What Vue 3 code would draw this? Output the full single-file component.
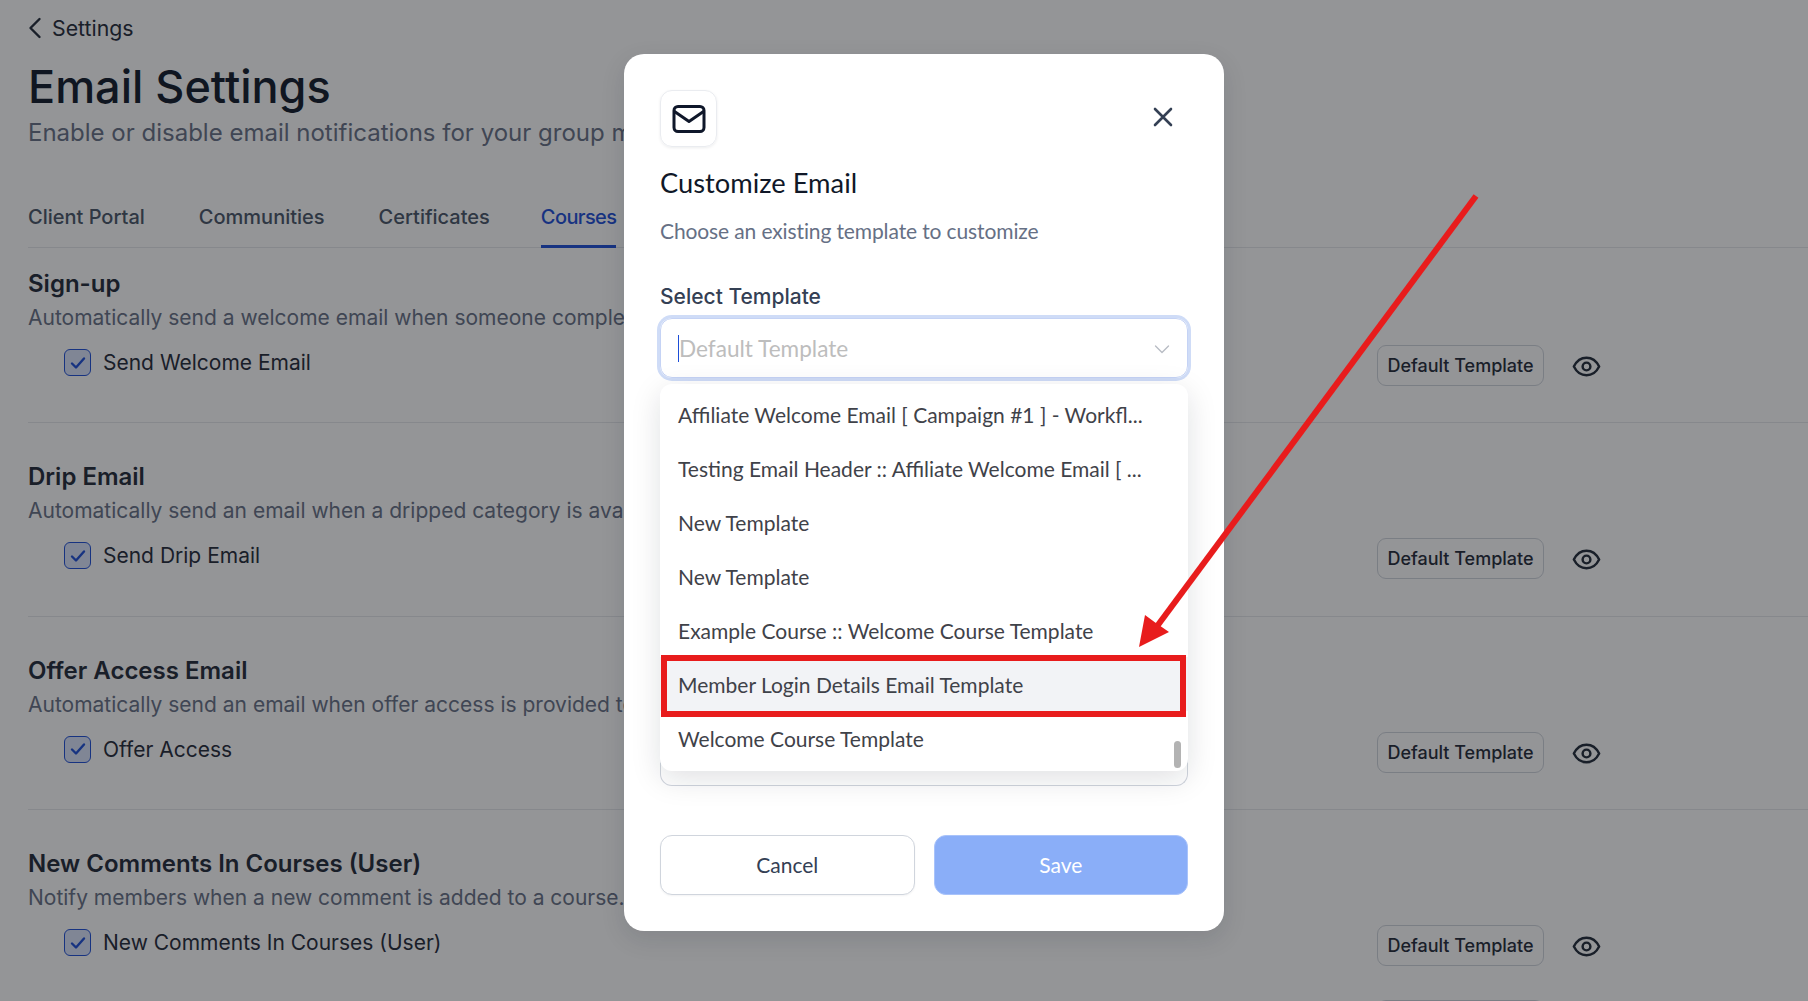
<script setup>
const tabs = ['Client Portal', 'Communities', 'Certificates', 'Courses']
const sections = [
  { title: 'Sign-up', desc: 'Automatically send a welcome email when someone completes their sign-up for a course.', label: 'Send Welcome Email' },
  { title: 'Drip Email', desc: 'Automatically send an email when a dripped category is available to a member.', label: 'Send Drip Email' },
  { title: 'Offer Access Email', desc: 'Automatically send an email when offer access is provided to a member.', label: 'Offer Access' },
  { title: 'New Comments In Courses (User)', desc: 'Notify members when a new comment is added to a course.', label: 'New Comments In Courses (User)', extra: true },
]
const templates = [
  'Affiliate Welcome Email [ Campaign #1 ] - Workfl...',
  'Testing Email Header :: Affiliate Welcome Email [ ...',
  'New Template',
  'New Template',
  'Example Course :: Welcome Course Template',
  'Member Login Details Email Template',
  'Welcome Course Template',
]
</script>

<template>
  <div class="page">
    <a class="back">
      <svg width="14" height="22" viewBox="0 0 14 22" fill="none"><path d="M11.5 2 L2.5 11 L11.5 20" stroke="#1f2937" stroke-width="2.4" stroke-linecap="round" stroke-linejoin="round"/></svg>
      <span>Settings</span>
    </a>
    <h1>Email Settings</h1>
    <p class="lead">Enable or disable email notifications for your group members and courses.</p>
    <nav class="tabs">
      <span v-for="t in tabs" :key="t" class="tab" :class="{ active: t === 'Courses' }">{{ t }}</span>
    </nav>
    <section v-for="s in sections" :key="s.title" class="section">
      <h2>{{ s.title }}</h2>
      <p class="desc">{{ s.desc }}</p>
      <div class="row">
        <label class="check">
          <span class="box">
            <svg width="20" height="20" viewBox="0 0 20 20" fill="none"><path d="M4 10.5 L8 14.5 L16 5.5" stroke="#1d4ed8" stroke-width="2.4" stroke-linecap="round" stroke-linejoin="round"/></svg>
          </span>
          {{ s.label }}
        </label>
        <div class="actions">
          <span class="pill">Default Template</span>
          <svg class="eye" width="31" height="31" viewBox="0 0 24 24" fill="none" stroke="#1f2937" stroke-width="1.9" stroke-linecap="round" stroke-linejoin="round"><path d="M2.2 12C4.4 7.6 8 5.2 12 5.2s7.6 2.4 9.8 6.8c-2.2 4.4-5.8 6.8-9.8 6.8S4.4 16.4 2.2 12z"/><circle cx="12" cy="12" r="3"/></svg>
        </div>
      </div>
      <div v-if="s.extra" class="actions more">
        <span class="pill"></span>
      </div>
    </section>
    <div class="overlay"></div>

    <div class="modal">
      <div class="modal-head">
        <span class="icon-box">
          <svg width="34" height="34" viewBox="0 0 34 34" fill="none" stroke="#0f172a" stroke-width="3" stroke-linecap="round" stroke-linejoin="round"><rect x="2" y="4.5" width="30" height="25" rx="4"/><path d="M2.5 9.5 L17 19.5 L31.5 9.5"/></svg>
        </span>
        <svg class="close" width="24" height="24" viewBox="0 0 24 24" fill="none"><path d="M4 4 L20 20 M20 4 L4 20" stroke="#344054" stroke-width="2.6" stroke-linecap="round"/></svg>
      </div>
      <h3>Customize Email</h3>
      <p class="sub">Choose an existing template to customize</p>
      <div class="label">Select Template</div>
      <div class="select">
        <i class="caret"></i>
        <span class="placeholder">Default Template</span>
        <svg class="chev" width="18" height="18" viewBox="0 0 18 18" fill="none"><path d="M2.5 6 L9 12.5 L15.5 6" stroke="#b8bcc4" stroke-width="1.4" stroke-linecap="round" stroke-linejoin="round"/></svg>
      </div>
      <div class="field-behind">
        <ul class="menu">
          <li v-for="(t, i) in templates" :key="i" :class="{ picked: i === 5 }">{{ t }}</li>
          <span class="thumb"></span>
        </ul>
      </div>
      <div class="buttons">
        <button class="cancel">Cancel</button>
        <button class="save">Save</button>
      </div>
    </div>

    <svg class="arrow" width="1808" height="1001" viewBox="0 0 1808 1001" fill="none">
      <line x1="1476" y1="196" x2="1155" y2="629" stroke="#e81c1c" stroke-width="6"/>
      <polygon points="1139,647 1145,615 1154.5,622 1169,632" fill="#e81c1c"/>
    </svg>
  </div>
</template>

<style scoped>
.page {
  position: relative;
  width: 1808px;
  height: 1001px;
  overflow: hidden;
  box-sizing: border-box;
  padding: 14px 0 0 28px;
  background: #fff;
  font-family: Inter, sans-serif;
  color: #111827;
}
.back {
  display: flex;
  align-items: center;
  gap: 10px;
  height: 28px;
  font-size: 21.3px;
  color: #1f2937;
}
h1 {
  margin: 18px 0 0;
  font-size: 45px;
  line-height: 54px;
  font-weight: 500;
  color: #101828;
}
.lead {
  margin: 3px 0 0;
  max-width: 596px;
  overflow: hidden;
  white-space: nowrap;
  font-size: 24px;
  line-height: 32px;
  color: #667085;
}
.tabs {
  display: flex;
  gap: 54px;
  margin-top: 39px;
  height: 59px;
  border-bottom: 1px solid #e5e7eb;
}
.tab {
  font-size: 20px;
  font-weight: 500;
  line-height: 58px;
  height: 60px;
  box-sizing: border-box;
  color: #475467;
}
.tab.active {
  margin-left: -3px;
  letter-spacing: -0.6px;
  color: #1d4ed8;
  border-bottom: 3px solid #1d4ed8;
}
.section {
  height: 193.5px;
  box-sizing: border-box;
  padding-top: 38px;
  border-bottom: 1px solid #e5e7eb;
}
.section:first-of-type {
  height: 175px;
  padding-top: 20px;
}
.section:last-of-type {
  border-bottom: 0;
}
h2 {
  margin: 0;
  font-size: 24px;
  line-height: 32px;
  font-weight: 600;
  color: #1f2937;
}
.desc {
  margin: 2px 0 0;
  max-width: 596px;
  overflow: hidden;
  font-size: 21px;
  line-height: 32px;
  color: #667085;
  white-space: nowrap;
}
.row {
  display: flex;
  justify-content: space-between;
  align-items: flex-start;
  padding: 15px 0 0 36px;
}
.check {
  display: flex;
  align-items: center;
  gap: 12px;
  font-size: 21px;
  color: #1f2937;
}
.box {
  width: 27px;
  height: 27px;
  box-sizing: border-box;
  display: flex;
  align-items: center;
  justify-content: center;
  border: 1.5px solid #1d4ed8;
  border-radius: 6px;
  background: #dbe4fb;
}
.actions {
  display: flex;
  align-items: center;
  gap: 27px;
  margin-right: 206px;
  margin-top: -4px;
}
.eye {
  margin-top: 2px;
}
.actions.more {
  justify-content: flex-end;
  margin-top: 34px;
  margin-right: 264px;
}
.pill {
  height: 41px;
  width: 167px;
  box-sizing: border-box;
  display: flex;
  align-items: center;
  justify-content: center;
  border: 1px solid #d0d5dd;
  border-radius: 9px;
  font-size: 18px;
  font-weight: 500;
  color: #1f2937;
}
.overlay {
  position: absolute;
  inset: 0;
  background: rgba(17, 20, 25, 0.45);
}
.modal {
  position: absolute;
  z-index: 1;
  left: 624px;
  top: 54px;
  width: 600px;
  height: 877px;
  box-sizing: border-box;
  padding: 36px;
  background: #fff;
  border-radius: 20px;
  box-shadow: 0 8px 24px rgba(16, 24, 40, 0.12);
  font-family: Lato, sans-serif;
}
.modal-head {
  display: flex;
  justify-content: space-between;
  align-items: center;
}
.icon-box {
  width: 57px;
  height: 57px;
  box-sizing: border-box;
  display: flex;
  align-items: center;
  justify-content: center;
  border: 1px solid #eaecf0;
  border-radius: 12px;
  box-shadow: 0 1px 3px rgba(16, 24, 40, 0.08);
}
.close {
  margin: -4px 13px 0 0;
}
h3 {
  margin: 20px 0 0;
  font-size: 27.3px;
  line-height: 32px;
  font-weight: 400;
  color: #101828;
}
.sub {
  margin: 16px 0 0;
  font-size: 21px;
  letter-spacing: -0.12px;
  line-height: 32px;
  color: #667085;
}
.label {
  margin-top: 35px;
  font-family: Inter, sans-serif;
  font-size: 21px;
  font-weight: 500;
  line-height: 30px;
  color: #344054;
}
.select {
  position: relative;
  display: flex;
  align-items: center;
  height: 60px;
  margin-top: 6px;
  padding: 0 18px;
  box-sizing: border-box;
  width: 528px;
  border: 1px solid #c5d3f5;
  border-radius: 12px;
  box-shadow: 0 0 0 3px #cfdcf7;
  font-size: 22.6px;
  color: #bdbdbd;
}
.caret {
  position: absolute;
  left: 17px;
  top: 16px;
  width: 1px;
  height: 27px;
  background: #1d4ed8;
}
.chev {
  position: absolute;
  right: 16px;
  top: 21px;
}
.field-behind {
  position: relative;
  height: 408px;
  width: 528px;
}
.field-behind::after {
  content: '';
  position: absolute;
  left: 0;
  right: 0;
  bottom: 0;
  height: 60px;
  box-sizing: border-box;
  border: 1px solid #d0d5dd;
  border-top: 0;
  border-radius: 0 0 12px 12px;
}
.menu {
  position: absolute;
  z-index: 1;
  left: 0;
  top: 6px;
  width: 528px;
  height: 387px;
  margin: 0;
  padding: 3px 0 0;
  list-style: none;
  box-sizing: border-box;
  background: #fff;
  border-radius: 12px;
  box-shadow: 0 8px 30px rgba(16, 24, 40, 0.13);
}
.menu li {
  position: relative;
  height: 54px;
  box-sizing: border-box;
  padding-left: 18px;
  display: flex;
  align-items: center;
  font-size: 21px;
  color: #3f4249;
  white-space: nowrap;
}
.menu li.picked {
  background: #f2f3f6;
}
.menu li.picked::after {
  content: '';
  position: absolute;
  inset: -2px 2px -6px 1px;
  border: 6px solid #e81c1c;
}
.thumb {
  position: absolute;
  right: 7px;
  bottom: 3px;
  width: 7px;
  height: 27px;
  border-radius: 4px;
  background: #b3b3b3;
}
.buttons {
  display: flex;
  gap: 19px;
  margin-top: 49px;
}
.buttons button {
  flex: 1;
  height: 60px;
  padding-bottom: 3px;
  border-radius: 12px;
  font-family: Lato, sans-serif;
  font-size: 21px;
}
.cancel {
  background: #fff;
  border: 1px solid #d0d5dd;
  color: #344054;
  box-shadow: 0 1px 2px rgba(16, 24, 40, 0.05);
}
.save {
  background: #8aaef8;
  border: 1px solid #a9c3fa;
  color: #fff;
}
.arrow {
  position: absolute;
  z-index: 2;
  left: 0;
  top: 0;
  pointer-events: none;
}
</style>
